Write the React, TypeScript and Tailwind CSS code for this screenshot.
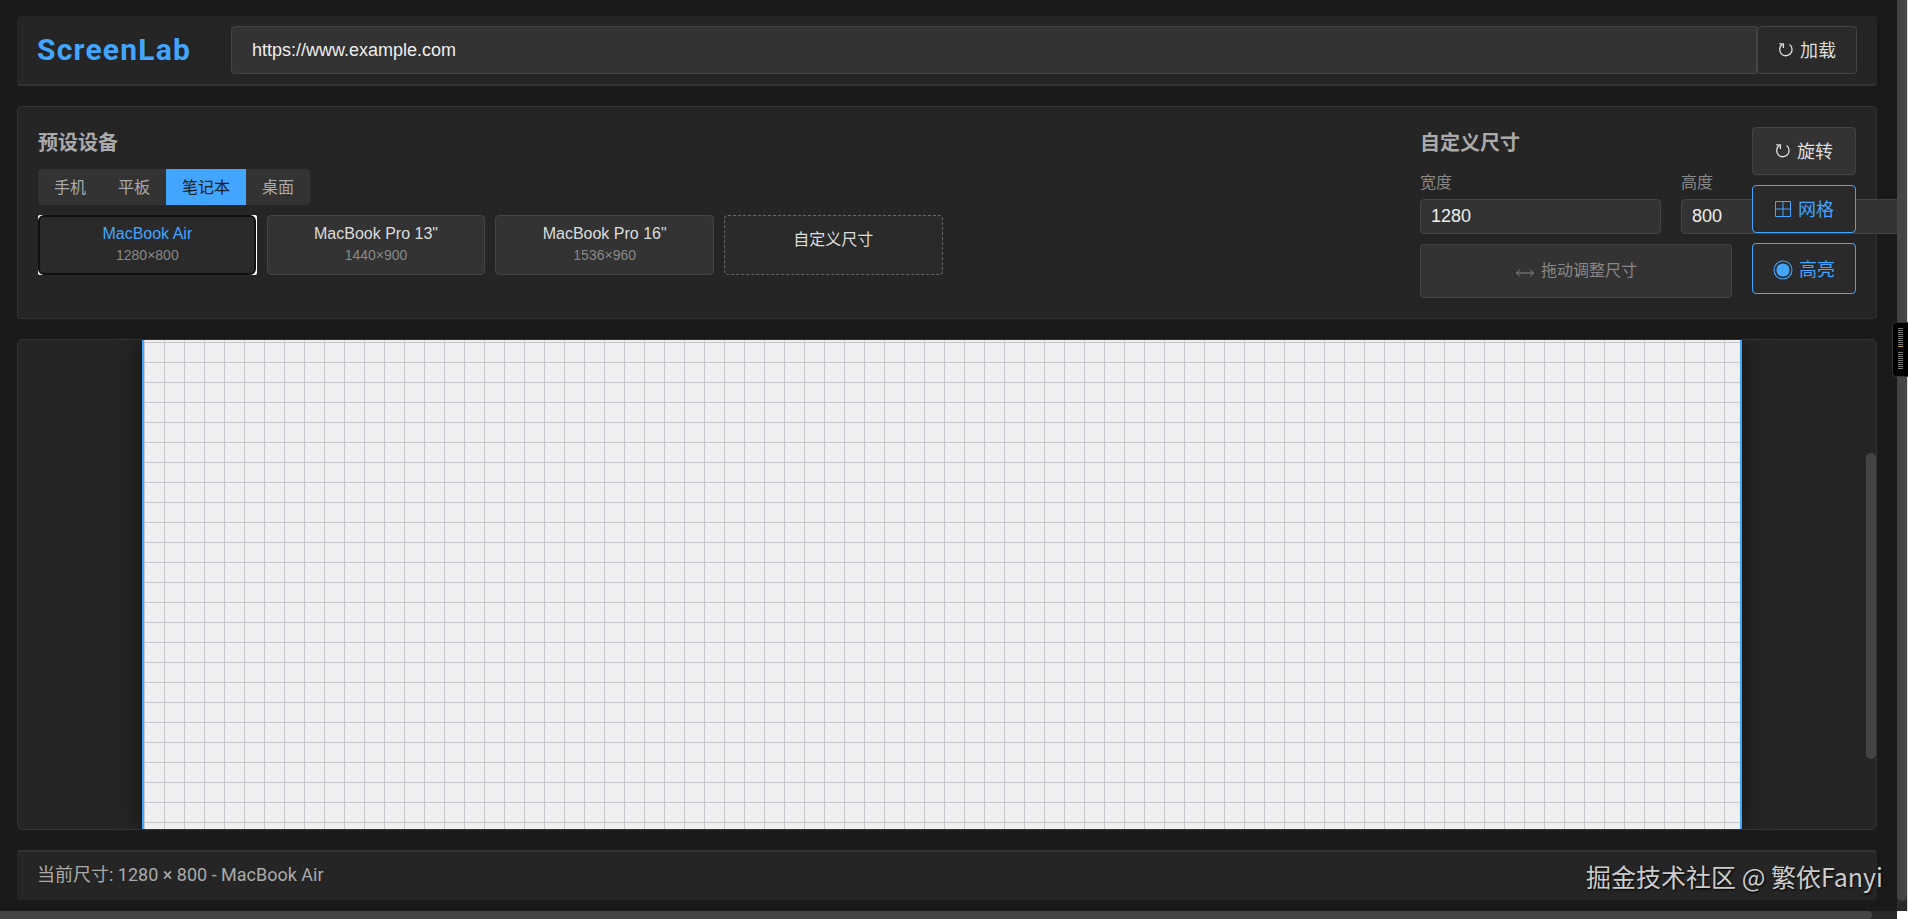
import { useState } from 'react';
import type { ReactNode } from 'react';

const ui = "font-['Liberation_Sans','Noto_Sans_CJK_SC',sans-serif]";

const categories = ['手机', '平板', '笔记本', '桌面'];

const devices = [
  { name: 'MacBook Air', width: 1280, height: 800 },
  { name: 'MacBook Pro 13"', width: 1440, height: 900 },
  { name: 'MacBook Pro 16"', width: 1536, height: 960 },
];

function RotateIcon() {
  return (
    <svg viewBox="0 0 16 16" className="size-4 -translate-y-px" fill="none" stroke="currentColor" strokeWidth="1.3" aria-hidden="true">
      <path d="M11.6 2.6A6.2 6.2 0 1 1 4.4 2.4" />
      <path d="M1.2 1.8H5.4V6" />
    </svg>
  );
}

function GridIcon() {
  return (
    <svg viewBox="0 0 18 18" className="size-[18px] -translate-y-px" fill="none" stroke="currentColor" aria-hidden="true">
      <path d="M1.5 1.5H16.5V16.5H1.5ZM9 1.5V16.5M1.5 9H16.5" />
    </svg>
  );
}

function HighlightIcon() {
  return (
    <svg viewBox="0 0 20 20" className="size-5" fill="none" stroke="currentColor" aria-hidden="true">
      <circle cx="10" cy="10" r="9" strokeWidth="1.1" />
      <circle cx="10" cy="10" r="6.6" fill="currentColor" stroke="none" />
    </svg>
  );
}

function DragIcon() {
  return (
    <svg viewBox="0 0 20 12" className="h-3 w-5 translate-y-0.5" fill="none" stroke="currentColor" aria-hidden="true">
      <path d="M1.5 6H18.5M5 2.5L1.5 6L5 9.5M15 2.5L18.5 6L15 9.5" />
    </svg>
  );
}

function ActionButton({ active, tall, children }: { active?: boolean; tall?: boolean; children: ReactNode }) {
  return (
    <button
      type="button"
      className={`relative flex items-center justify-center gap-1.5 rounded border pt-0.5 text-lg ${ui} ${tall ? 'h-[51px]' : 'h-12'} ${
        active ? 'border-[#42a5ff] bg-[#2a2a2a] text-[#42a5ff]' : 'border-[#444] bg-[#333] text-[#ddd]'
      }`}
    >
      {children}
    </button>
  );
}

function DimensionField({ id, label, value, onChange }: { id: string; label: string; value: string; onChange: (v: string) => void }) {
  return (
    <div className="flex w-[241px] shrink-0 flex-col gap-1">
      <label htmlFor={id} className="pt-0.5 text-base leading-6 text-[#888]">
        {label}
      </label>
      <input
        id={id}
        value={value}
        onChange={(e) => onChange(e.target.value)}
        className={`h-[35px] w-full rounded border border-[#444] bg-[#333] px-2.5 text-lg text-[#eee] outline-none ${ui}`}
      />
    </div>
  );
}

export default function App() {
  const [url, setUrl] = useState('https://www.example.com');
  const [width, setWidth] = useState('1280');
  const [height, setHeight] = useState('800');
  const [category, setCategory] = useState('笔记本');

  return (
    <div className="relative flex h-screen flex-col overflow-hidden bg-[#1a1a1a] font-[Roboto,'Noto_Sans_CJK_SC',sans-serif] text-[#aaa]">
      <div className="flex min-h-0 flex-1 flex-col gap-5 pt-4 pr-[31px] pb-[19px] pl-[17px]">
        <header className="flex h-[70px] shrink-0 items-center rounded border-b-2 border-[#333] bg-[#252525] px-5">
          <h1 className="w-[194px] text-3xl font-bold tracking-[0.04em] text-[#42a5ff]">ScreenLab</h1>
          <form className="flex h-12 flex-1" onSubmit={(e) => e.preventDefault()}>
            <input
              aria-label="URL"
              value={url}
              onChange={(e) => setUrl(e.target.value)}
              className={`min-w-0 flex-1 rounded-l border border-[#444] bg-[#333] px-5 text-lg text-[#eee] outline-none ${ui}`}
            />
            <button type="submit" className={`flex w-[100px] items-center justify-center gap-1.5 rounded border border-[#444] bg-[#2a2a2a] pt-0.5 text-lg text-[#ddd] ${ui}`}>
              <RotateIcon />
              加载
            </button>
          </form>
        </header>

        <section className="flex shrink-0 gap-5 rounded border border-[#333] bg-[#252525] p-5">
          <div className="min-w-0 flex-1">
            <h2 className="mb-2.5 text-xl leading-8 font-bold">预设设备</h2>
            <div className="mb-2.5 flex w-fit overflow-hidden rounded bg-[#333]">
              {categories.map((c) => (
                <button
                  key={c}
                  type="button"
                  onClick={() => setCategory(c)}
                  className={`h-9 px-4 pt-0.5 text-base ${ui} ${c === category ? 'bg-[#42a5ff] text-[#1a1a1a]' : 'text-[#aaa]'}`}
                >
                  {c}
                </button>
              ))}
            </div>
            <div className="grid grid-cols-6 gap-2.5">
              {devices.map((d, i) => (
                <button
                  key={d.name}
                  type="button"
                  className={`relative flex h-[60px] flex-col items-center ${ui} ${
                    i === 0 ? 'rounded-xs bg-white pt-2' : 'rounded border border-[#444] bg-[#333] pt-[7px]'
                  }`}
                >
                  {i === 0 && <span className="absolute inset-y-0 right-px left-0 rounded-md border-2 border-[#101010] bg-[#2a2a2a]" />}
                  <span className={`relative text-base leading-[22px] ${i === 0 ? 'text-[#42a5ff]' : 'text-[#ddd]'}`}>{d.name}</span>
                  <span className="relative text-sm leading-5 text-[#888]">{`${d.width}×${d.height}`}</span>
                </button>
              ))}
              <button type="button" className={`h-[60px] rounded border border-dashed border-[#666] bg-[#2a2a2a] pb-2.5 text-base text-[#ddd] ${ui}`}>
                自定义尺寸
              </button>
            </div>
          </div>

          <div className="w-[312px] shrink-0">
            <h2 className="text-xl leading-8 font-bold">自定义尺寸</h2>
            <div className="mt-2.5 mb-2.5 flex gap-5">
              <DimensionField id="width" label="宽度" value={width} onChange={setWidth} />
              <DimensionField id="height" label="高度" value={height} onChange={setHeight} />
            </div>
            <button type="button" className={`flex h-[54px] w-full items-center justify-center gap-1.5 rounded border border-[#444] bg-[#333] text-base text-[#888] ${ui}`}>
              <DragIcon />
              拖动调整尺寸
            </button>
          </div>

          <div className="flex w-[104px] shrink-0 flex-col gap-2.5">
            <ActionButton>
              <RotateIcon />
              旋转
            </ActionButton>
            <ActionButton active>
              <GridIcon />
              网格
            </ActionButton>
            <ActionButton active tall>
              <HighlightIcon />
              高亮
            </ActionButton>
          </div>
        </section>

        <main className="relative flex min-h-0 flex-1 overflow-hidden rounded-md border border-[#333] bg-[#252525] pr-[134px] pl-[124px]">
          <div className="flex-1 border-x-2 border-[#42a5ff] bg-[#efeff2] bg-[linear-gradient(#c6c6ca_1px,transparent_1px),linear-gradient(90deg,#c6c6ca_1px,transparent_1px)] bg-size-[20px_20px] bg-position-[0_2px] shadow-[0_0_24px_rgba(0,0,0,0.5)]" />
          <div className="absolute top-[23.2%] right-0 h-[62.5%] w-2.5 rounded-full bg-[#444]" />
        </main>

        <footer className="flex h-[50px] shrink-0 items-center rounded border-t-2 border-[#333] bg-[#252525] px-5 pb-0.5 text-lg">
          当前尺寸: 1280 × 800 - MacBook Air
        </footer>
      </div>

      <div className="absolute inset-y-0 right-0 flex w-[11px] flex-col border-r border-[#ddd] bg-[#2a2a2a]">
        <div className="flex-1 rounded-b-full bg-[#444]" />
        <div className="h-[18px]" />
      </div>
      <div className="absolute inset-x-0 bottom-0 flex h-2 bg-[#2a2a2a]">
        <div className="flex-1 rounded-r-full bg-[#444]" />
        <div className="w-[25px]" />
        <div className="w-[11px] bg-white" />
      </div>

      <div className="absolute top-[322px] right-0 flex h-[55px] w-4 flex-col items-end gap-1 rounded-l border border-r-0 border-[#333] bg-black pt-[5px] pr-[5px]">
        <span className="flex h-5 w-[5px] items-end bg-[repeating-linear-gradient(#777_0_1px,#000_1px_2px)] pb-px">
          <span className="h-px w-full bg-[#c9a227]" />
        </span>
        <span className="h-[18px] w-[5px] bg-[repeating-linear-gradient(#777_0_1px,#000_1px_2px)]" />
      </div>

      <p className="absolute right-[25px] bottom-[25px] font-['Noto_Sans_CJK_SC',sans-serif] text-[25px] leading-9 text-[#ccc] [text-shadow:1px_1px_2px_#000]">
        掘金技术社区 @ 繁依Fanyi
      </p>
    </div>
  );
}
